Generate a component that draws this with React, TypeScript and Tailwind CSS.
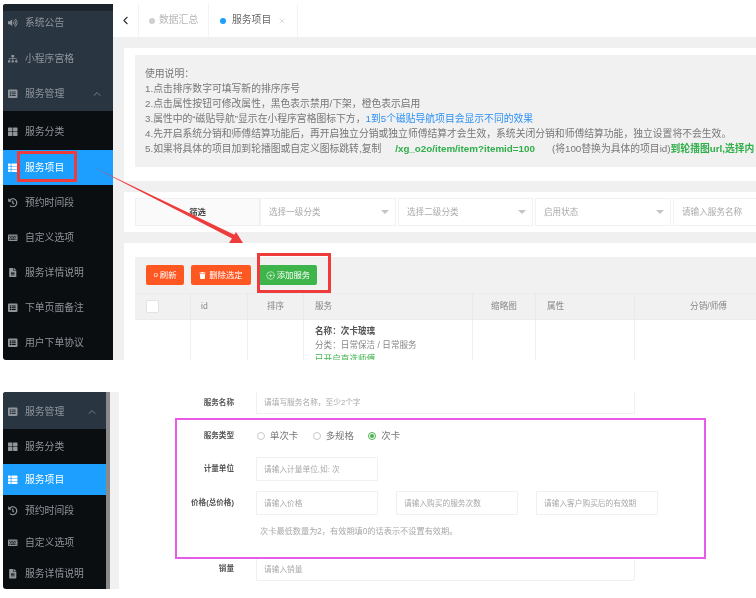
import type { ReactNode } from "react";
import {
  FaVolumeUp,
  FaSitemap,
  FaListAlt,
  FaThLarge,
  FaThList,
  FaHistory,
  FaKeyboard,
  FaFileAlt,
  FaTrash,
} from "react-icons/fa";
import { ChevronUp, ChevronLeft, CirclePlus, X } from "lucide-react";

function NavItem({
  icon,
  label,
  className = "",
}: {
  icon: ReactNode;
  label: string;
  className?: string;
}) {
  return (
    <div className={`flex items-center gap-[7px] pl-[5px] text-[9.8px] ${className}`}>
      <span className="flex w-[10px] justify-center text-[9.5px]">{icon}</span>
      <span className="pt-[1px]">{label}</span>
    </div>
  );
}

function TopSidebar() {
  return (
    <aside className="flex w-[110px] shrink-0 flex-col overflow-hidden rounded-l-[3px] bg-[#0b0e11] text-[#8f959b]">
      <div className="h-[7px] bg-[#1b232c]" />
      <div className="bg-[#2a3542]">
        <NavItem icon={<FaVolumeUp />} label="系统公告" className="h-[30px] pb-[6px]" />
        <NavItem icon={<FaSitemap />} label="小程序宫格" className="h-[35px]" />
        <div className="flex h-[35px] items-center justify-between pr-[10px]">
          <NavItem icon={<FaListAlt />} label="服务管理" />
          <ChevronUp size={12} strokeWidth={1.5} />
        </div>
      </div>
      <NavItem icon={<FaThLarge />} label="服务分类" className="h-[39px] pt-[3px]" />
      <NavItem icon={<FaThList />} label="服务项目" className="h-[35px] bg-[#1c9fff] text-white" />
      <NavItem icon={<FaHistory />} label="预约时间段" className="h-[35px]" />
      <NavItem icon={<FaKeyboard />} label="自定义选项" className="h-[35px]" />
      <NavItem icon={<FaFileAlt />} label="服务详情说明" className="h-[35px]" />
      <NavItem icon={<FaListAlt />} label="下单页面备注" className="h-[35px]" />
      <NavItem icon={<FaListAlt />} label="用户下单协议" className="h-[35px]" />
    </aside>
  );
}

function TabBar() {
  return (
    <div className="flex h-[33px] items-center bg-white text-[9.8px]">
      <div className="flex h-full w-[26px] items-center justify-center border-r border-[#f3f3f3] text-[#333]">
        <ChevronLeft size={13} strokeWidth={2} />
      </div>
      <div className="flex h-full w-[70px] items-center gap-[4px] border-r border-[#f3f3f3] pl-[10px] text-[#b5b5b5]">
        <span className="h-[6px] w-[6px] rounded-full bg-[#cfcfcf]" />
        数据汇总
      </div>
      <div className="flex h-full w-[89px] items-center border-r border-[#f3f3f3] pl-[11px] text-[#666]">
        <span className="mr-[6px] h-[6px] w-[6px] rounded-full bg-[#1c9fff]" />
        服务项目
        <X size={8} className="ml-[7px] text-[#c8c8c8]" />
      </div>
    </div>
  );
}

function Notes() {
  return (
    <div className="h-[112px] whitespace-nowrap bg-[#f1f1f1] pl-[10px] pt-[11px] text-[9.8px] leading-[15px] text-[#777]">
      <div>使用说明：</div>
      <div>1.点击排序数字可填写新的排序序号</div>
      <div>2.点击属性按钮可修改属性，黑色表示禁用/下架，橙色表示启用</div>
      <div>
        3.属性中的“磁贴导航”显示在小程序宫格图标下方，
        <span className="text-[#2b90f5]">1到5个磁贴导航项目会显示不同的效果</span>
      </div>
      <div>4.先开启系统分销和师傅结算功能后，再开启独立分销或独立师傅结算才会生效，系统关闭分销和师傅结算功能，独立设置将不会生效。</div>
      <div>
        5.如果将具体的项目加到轮播图或自定义图标跳转,复制
        <span className="ml-[14px] font-bold text-[#2fae4a]">/xg_o2o/item/item?itemid=100</span>
        <span className="ml-[17px]">(将100替换为具体的项目id)</span>
        <span className="font-bold text-[#2fae4a]">到轮播图url,选择内</span>
      </div>
    </div>
  );
}

function SelectBox({ label, width }: { label: string; width: string }) {
  return (
    <div className={`flex h-[28px] shrink-0 items-center justify-between border border-[#f2f2f2] pl-[8px] pr-[6px] text-[8.6px] text-[#aaa] ${width}`}>
      {label}
      <span className="h-0 w-0 border-x-[4px] border-t-[4px] border-x-transparent border-t-[#c4c4c4]" />
    </div>
  );
}

function Filters() {
  return (
    <div className="ml-[11px] mt-[11px] flex h-[40px] gap-[2px] bg-white pl-[11px] pt-[6px]">
      <div className="-mr-[2px] flex h-[28px] w-[125px] shrink-0 items-center justify-center border border-[#f0f0f0] bg-[#fafafa] text-[8.4px] font-bold text-[#444]">
        筛选
      </div>
      <SelectBox label="选择一级分类" width="w-[136px]" />
      <SelectBox label="选择二级分类" width="w-[135px]" />
      <SelectBox label="启用状态" width="w-[136px]" />
      <div className="flex h-[28px] w-[120px] shrink-0 items-center border border-[#f2f2f2] pl-[8px] text-[8.6px] text-[#aaa]">
        请输入服务名称
      </div>
    </div>
  );
}

const columns = [
  { label: "", width: "w-[56px]" },
  { label: "id", width: "w-[57px] pl-[10px]" },
  { label: "排序", width: "w-[56px] justify-center" },
  { label: "服务", width: "w-[169px] pl-[11px]" },
  { label: "缩略图", width: "w-[63px] justify-center" },
  { label: "属性", width: "w-[99px] pl-[11px]" },
  { label: "分销/师傅", width: "w-[148px] justify-center" },
];

function ServiceTable() {
  return (
    <div className="ml-[11px] mt-[11px] h-[117px] overflow-hidden bg-white pl-[11px] pt-[14px]">
      <div className="flex h-[36px] items-center gap-[7px] bg-[#f1f1f1] pl-[11px] text-[8.4px] text-white">
        <button className="flex h-[20px] w-[38px] items-center justify-center gap-[2px] rounded-[2px] bg-[#ff5722]">
          <span className="text-[8px]">o</span>刷新
        </button>
        <button className="flex h-[20px] w-[60px] items-center justify-center gap-[3px] rounded-[2px] bg-[#ff5722]">
          <FaTrash size={7} />删除选定
        </button>
        <button className="ml-[1px] flex h-[20px] w-[58px] items-center justify-center gap-[2px] rounded-[2px] bg-[#3db54a]">
          <CirclePlus size={9} strokeWidth={1.5} />添加服务
        </button>
      </div>
      <div className="flex h-[27px] w-[648px] border-y border-[#ececec] bg-[#f1f1f1] text-[8.6px] text-[#888]">
        {columns.map((col, i) => (
          <div key={i} className={`flex shrink-0 items-center border-r border-[#e9e9e9] ${col.width}`}>
            {i === 0 ? <span className="ml-[11px] h-[13px] w-[13px] rounded-[2px] border border-[#e2e2e2] bg-white" /> : col.label}
          </div>
        ))}
      </div>
      <div className="flex h-[40px] w-[648px] text-[8.6px] text-[#888]">
        {columns.map((col, i) => (
          <div key={i} className={`shrink-0 border-r border-[#efefef] ${col.width.split(" ")[0]}`}>
            {i === 3 && (
              <div className="whitespace-nowrap pl-[11px] pt-[4px] leading-[14px]">
                <div className="font-bold text-[#555]">名称：次卡玻璃</div>
                <div>分类：日常保洁 / 日常服务</div>
                <div className="text-[#3db54a]">已开启直选师傅</div>
              </div>
            )}
          </div>
        ))}
      </div>
    </div>
  );
}

function TopShot() {
  return (
    <section className="ml-[3px] flex h-[356px] overflow-hidden">
      <TopSidebar />
      <div className="min-w-0 flex-1 overflow-hidden bg-[#f0f0f0]">
        <TabBar />
        <div className="ml-[11px] mt-[11px] bg-white pb-[14px] pl-[11px] pt-[7px]">
          <Notes />
        </div>
        <Filters />
        <ServiceTable />
      </div>
    </section>
  );
}

function BottomSidebar() {
  return (
    <aside className="flex w-[103px] shrink-0 flex-col overflow-hidden rounded-l-[3px] bg-[#0b0e11] text-[#8f959b]">
      <div className="flex h-[37px] shrink-0 items-center justify-between bg-[#2a3542] pr-[8px] pt-[2px]">
        <NavItem icon={<FaListAlt />} label="服务管理" />
        <ChevronUp size={12} strokeWidth={1.5} />
      </div>
      <NavItem icon={<FaThLarge />} label="服务分类" className="h-[35px] shrink-0" />
      <NavItem icon={<FaThList />} label="服务项目" className="h-[31px] shrink-0 bg-[#1c9fff] text-white" />
      <NavItem icon={<FaHistory />} label="预约时间段" className="h-[32px] shrink-0" />
      <NavItem icon={<FaKeyboard />} label="自定义选项" className="h-[32px] shrink-0" />
      <NavItem icon={<FaFileAlt />} label="服务详情说明" className="h-[30px] shrink-0" />
    </aside>
  );
}

function FormRow({
  label,
  className = "",
  children,
}: {
  label: string;
  className?: string;
  children: ReactNode;
}) {
  return (
    <div className={`flex items-center ${className}`}>
      <div className="w-[115px] shrink-0 text-right text-[7.6px] font-bold text-[#555]">{label}</div>
      <div className="ml-[22px] flex">{children}</div>
    </div>
  );
}

function TextInput({ placeholder, width }: { placeholder: string; width: string }) {
  return (
    <input
      readOnly
      placeholder={placeholder}
      className={`h-[24px] rounded-[1px] border border-[#f0f0f0] bg-white pl-[7px] text-[7.7px] outline-none placeholder:text-[#a8a8a8] ${width}`}
    />
  );
}

function Radio({ label, checked = false }: { label: string; checked?: boolean }) {
  return (
    <label className="flex items-center gap-[5px] text-[9.4px] text-[#777]">
      <span className={`flex h-[8px] w-[8px] items-center justify-center rounded-full border ${checked ? "border-[#4caf50]" : "border-[#c8c8c8]"}`}>
        {checked && <span className="h-[4px] w-[4px] rounded-full bg-[#4caf50]" />}
      </span>
      {label}
    </label>
  );
}

function BottomShot() {
  return (
    <section className="ml-[3px] mt-[32px] flex h-[197px] overflow-hidden">
      <BottomSidebar />
      <div className="w-[4px] shrink-0 bg-[#8a8a8a]" />
      <div className="w-[9px] shrink-0 bg-[#f1f1f1]" />
      <div className="min-w-0 flex-1 bg-white">
        <FormRow label="服务名称">
          <input
            readOnly
            placeholder="请填写服务名称，至少2个字"
            className="h-[22px] w-[379px] rounded-[1px] border border-t-0 border-[#f0f0f0] pl-[7px] text-[7.7px] outline-none placeholder:text-[#a8a8a8]"
          />
        </FormRow>
        <FormRow label="服务类型" className="mt-[10px] h-[24px]">
          <div className="ml-[1px] flex gap-[14.5px]">
            <Radio label="单次卡" />
            <Radio label="多规格" />
            <Radio label="次卡" checked />
          </div>
        </FormRow>
        <FormRow label="计量单位" className="mt-[9px]">
          <TextInput placeholder="请输入计量单位,如: 次" width="w-[122px]" />
        </FormRow>
        <FormRow label="价格(总价格)" className="mt-[10px]">
          <div className="flex gap-[18px]">
            <TextInput placeholder="请输入价格" width="w-[122px]" />
            <TextInput placeholder="请输入购买的服务次数" width="w-[122px]" />
            <TextInput placeholder="请输入客户购买后的有效期" width="w-[122px]" />
          </div>
        </FormRow>
        <div className="ml-[141px] mt-[9px] flex h-[16px] items-center text-[8.2px] text-[#a8a8a8]">
          次卡最低数量为2，有效期填0的话表示不设置有效期。
        </div>
        <FormRow label="销量" className="mt-[17px]">
          <TextInput placeholder="请输入销量" width="w-[379px]" />
        </FormRow>
      </div>
    </section>
  );
}

export default function App() {
  return (
    <div className="relative h-[598px] w-[756px] overflow-hidden bg-white pt-[4px] font-['Liberation_Sans','Noto_Sans_CJK_SC',sans-serif] blur-[0.5px]">
      <TopShot />
      <BottomShot />

      {/* annotations drawn over the screenshots */}
      <div className="absolute left-[17px] top-[151px] h-[31px] w-[60px] border-[3px] border-[#ee3b3b]" />
      <div className="absolute left-[257px] top-[253px] h-[40px] w-[74px] border-[3px] border-[#ee3b3b]" />
      <div className="absolute left-[175px] top-[418px] h-[141px] w-[531px] border-[2px] border-[#e85ae8]" />
      <svg className="absolute left-[90px] top-[160px]" width="160" height="85" viewBox="0 0 160 85">
        <polygon points="3,7 147,76 145,80" fill="#ee3b3b" />
        <polygon points="153,83 139,83 146,72" fill="#ee3b3b" />
      </svg>
    </div>
  );
}
